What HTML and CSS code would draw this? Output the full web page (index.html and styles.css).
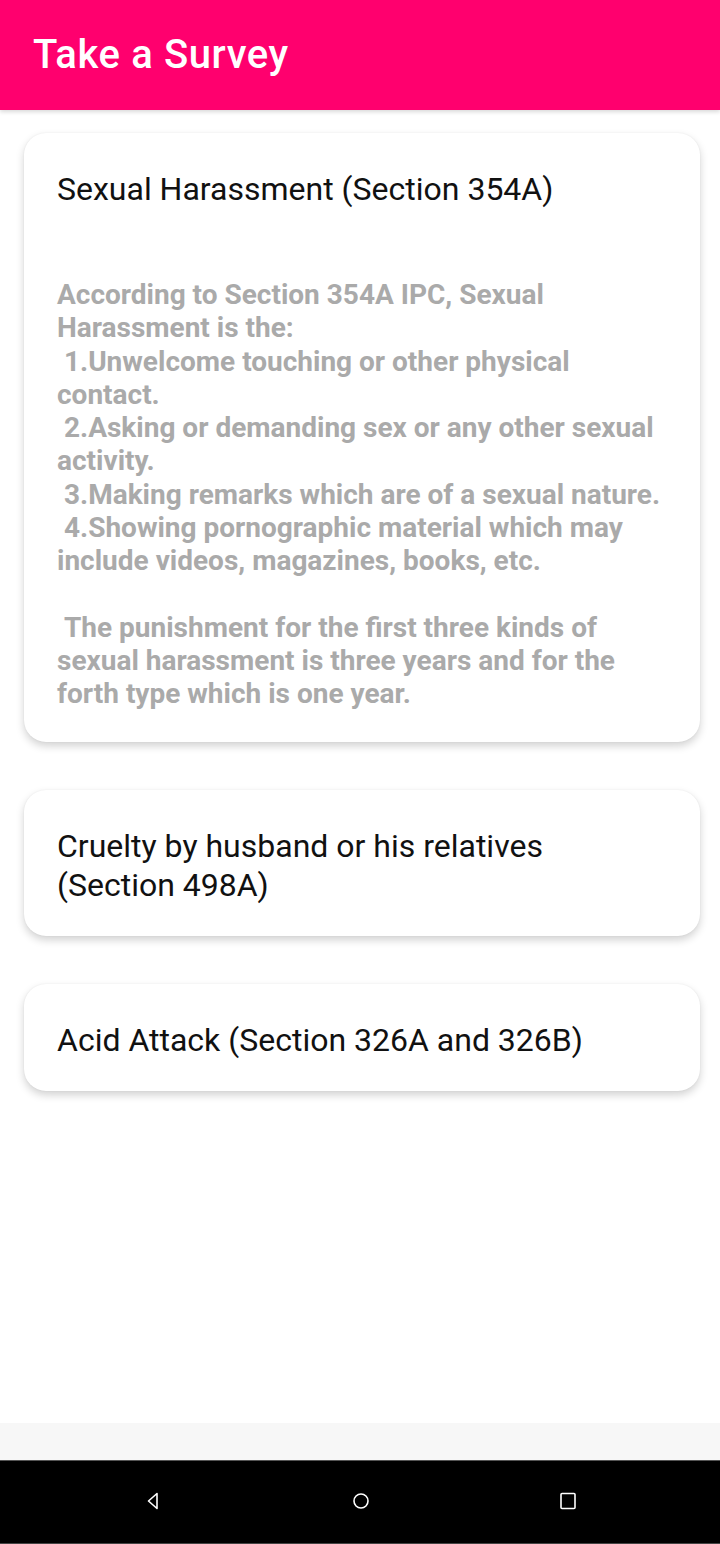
FILE: index.html
```html
<!DOCTYPE html>
<html>
<head>
<meta charset="utf-8">
<link rel="stylesheet" href="styles.css">
</head>
<body>
<div class="screen">
  <header class="appbar"><h1 class="appbar-title">Take a Survey</h1></header>
  <main class="content">
    <section class="card">
      <h2 class="card-title">Sexual Harassment (Section 354A)</h2>
      <p class="card-body">According to Section 354A IPC, Sexual Harassment is the:
 1.Unwelcome touching or other physical contact.
 2.Asking or demanding sex or any other sexual activity.
 3.Making remarks which are of a sexual nature.
 4.Showing pornographic material which may include videos, magazines, books, etc.

 The punishment for the first three kinds of sexual harassment is three years and for the forth type which is one year.</p>
    </section>
    <section class="card">
      <h2 class="card-title">Cruelty by husband or his relatives (Section 498A)</h2>
    </section>
    <section class="card">
      <h2 class="card-title">Acid Attack (Section 326A and 326B)</h2>
    </section>
  </main>
  <div class="bottom-strip"></div>
  <nav class="navbar">
    <svg class="nav-icon" width="20" height="20" viewBox="0 0 20 20"><path d="M14 2.5 L5.5 10 L14 17.5 Z" fill="none" stroke="#fff" stroke-width="1.6" stroke-linejoin="round"/></svg>
    <svg class="nav-icon" width="20" height="20" viewBox="0 0 20 20"><circle cx="10" cy="10" r="7" fill="none" stroke="#fff" stroke-width="1.6"/></svg>
    <svg class="nav-icon" width="20" height="20" viewBox="0 0 20 20"><rect x="3" y="2.5" width="14" height="15" rx="1" fill="none" stroke="#fff" stroke-width="1.6"/></svg>
  </nav>
</div>
</body>
</html>
```
FILE: styles.css
```css
* { box-sizing: border-box; }
html, body { margin: 0; padding: 0; background: #fff; }
body { font-family: Roboto, "Liberation Sans", sans-serif; }
.screen { width: 720px; height: 1544px; display: flex; flex-direction: column; overflow: hidden; }
.appbar { height: 110px; background: #ff006e; display: flex; align-items: center; padding: 0 33px; box-shadow: 0 2px 4px rgba(0,0,0,0.15); position: relative; z-index: 1; }
.appbar-title { margin: 0; color: #fff; font-weight: 500; font-size: 40px; line-height: 44px; letter-spacing: 0.6px; }
.content { flex: 1; padding: 23px 20px 0 24px; display: flex; flex-direction: column; gap: 48px; }
.card { background: #fff; border-radius: 22px; padding: 37px 33px 31px 33px; box-shadow: 0 4px 9px rgba(0,0,0,0.18), 0 0 2px rgba(0,0,0,0.06); }
.card-title { margin: 0; padding-right: 8px; font-weight: 400; font-size: 32px; line-height: 39px; color: #111; }
.card-body { margin: 69px 0 1px; white-space: pre-wrap; font-weight: 700; font-size: 28px; line-height: 33.25px; color: #aaaaaa; }
.bottom-strip { height: 38px; background: #f7f7f7; border-bottom: 1px solid #555; }
.navbar { height: 83px; background: #000; display: flex; align-items: center; justify-content: space-between; padding: 0 142px 2px 143px; border-bottom: 1px solid #444; }
.nav-icon { display: block; }
```
